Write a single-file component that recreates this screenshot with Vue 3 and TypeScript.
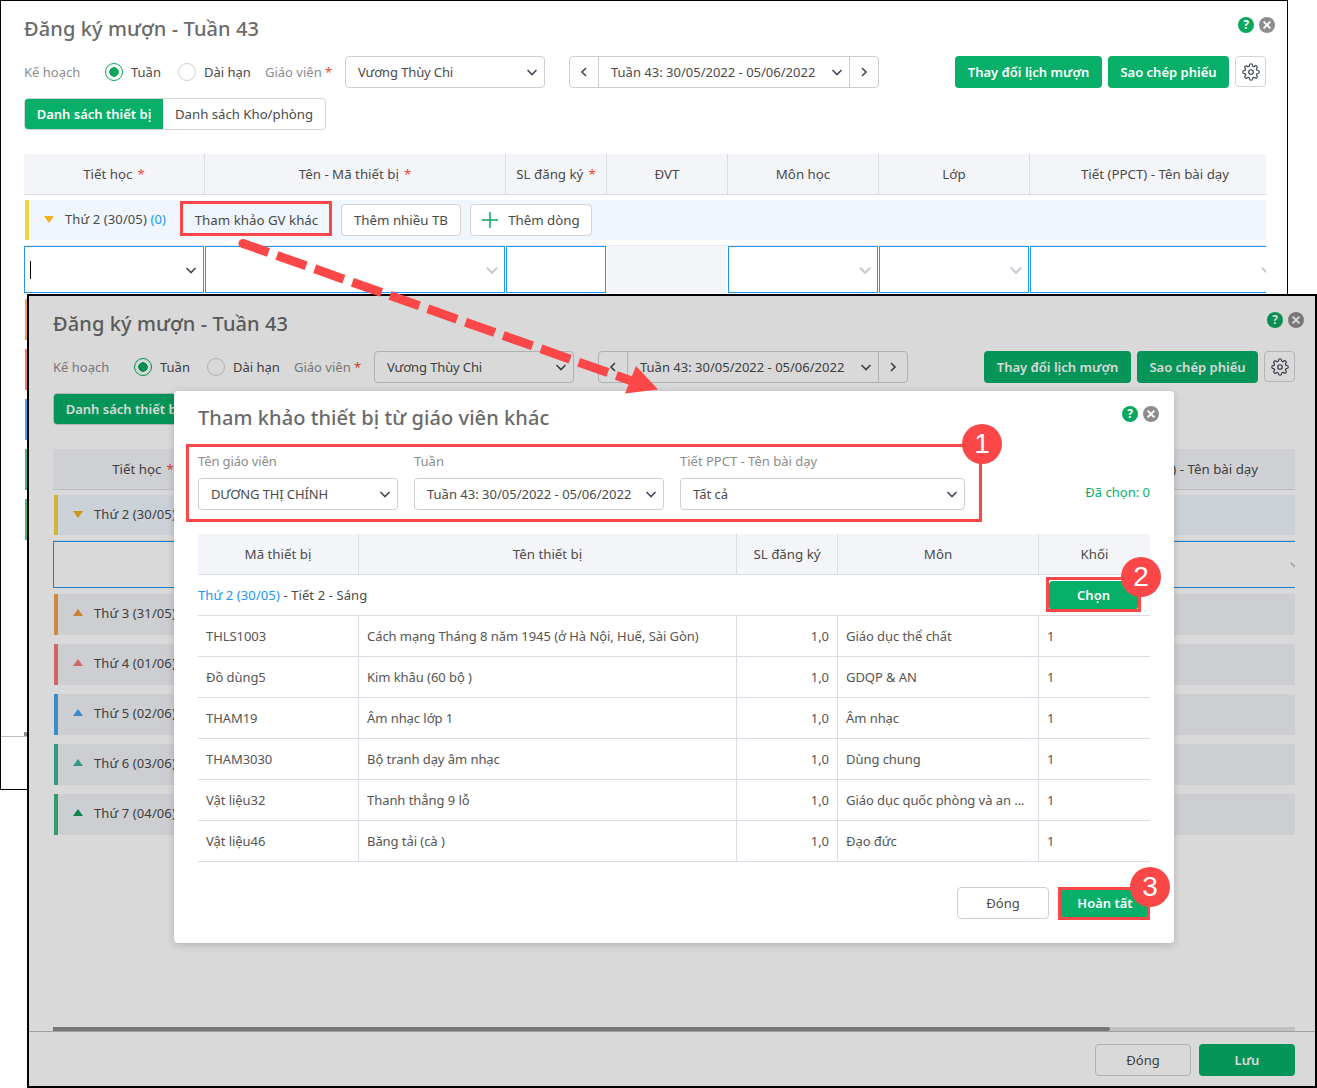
<script setup lang="ts">
const windows = [
  { key: 'back', cls: 'win-back', modal: false },
  { key: 'front', cls: 'win-front', modal: true },
]
const columns = [
  { label: 'Tiết học', req: true, underModal: false },
  { label: 'Tên - Mã thiết bị', req: true, underModal: true },
  { label: 'SL đăng ký', req: true, underModal: true },
  { label: 'ĐVT', req: false, underModal: true },
  { label: 'Môn học', req: false, underModal: true },
  { label: 'Lớp', req: false, underModal: true },
  { label: 'Tiết (PPCT) - Tên bài dạy', req: false, underModal: false },
]
const editCells = [
  { cls: 'cell-strong', chev: 'dark', caret: true },
  { cls: '', chev: 'light', caret: false },
  { cls: '', chev: '', caret: false },
  { cls: 'cell-off', chev: '', caret: false },
  { cls: '', chev: 'light', caret: false },
  { cls: '', chev: 'light', caret: false },
  { cls: 'cell-last', chev: 'light', caret: false },
]
const days = [
  { label: 'Thứ 3 (31/05)', color: '#f0a24a', dark: '#ea9a3d' },
  { label: 'Thứ 4 (01/06)', color: '#f4787a', dark: '#f0797b' },
  { label: 'Thứ 5 (02/06)', color: '#45a5ee', dark: '#45a5ee' },
  { label: 'Thứ 6 (03/06)', color: '#3fb39c', dark: '#3fb39c' },
  { label: 'Thứ 7 (04/06)', color: '#3cb878', dark: '#0f9d58' },
]
const modalCols = ['Mã thiết bị', 'Tên thiết bị', 'SL đăng ký', 'Môn', 'Khối']
const items = [
  { code: 'THLS1003', name: 'Cách mạng Tháng 8 năm 1945 (ở Hà Nội, Huế, Sài Gòn)', qty: '1,0', subject: 'Giáo dục thể chất', grade: '1' },
  { code: 'Đồ dùng5', name: 'Kim khâu (60 bộ )', qty: '1,0', subject: 'GDQP & AN', grade: '1' },
  { code: 'THAM19', name: 'Âm nhạc lớp 1', qty: '1,0', subject: 'Âm nhạc', grade: '1' },
  { code: 'THAM3030', name: 'Bộ tranh dạy âm nhạc', qty: '1,0', subject: 'Dùng chung', grade: '1' },
  { code: 'Vật liệu32', name: 'Thanh thẳng 9 lỗ', qty: '1,0', subject: 'Giáo dục quốc phòng và an ...', grade: '1' },
  { code: 'Vật liệu46', name: 'Băng tải (cà )', qty: '1,0', subject: 'Đạo đức', grade: '1' },
]
const marks = [
  { n: '1', x: 962, y: 424 },
  { n: '2', x: 1121, y: 557 },
  { n: '3', x: 1130, y: 867 },
]
const gear =
  'M19.4 15a1.65 1.65 0 0 0 .33 1.82l.06.06a2 2 0 0 1 0 2.83 2 2 0 0 1-2.83 0l-.06-.06a1.65 1.65 0 0 0-1.82-.33 1.65 1.65 0 0 0-1 1.51V21a2 2 0 0 1-2 2 2 2 0 0 1-2-2v-.09A1.65 1.65 0 0 0 9 19.4a1.65 1.65 0 0 0-1.82.33l-.06.06a2 2 0 0 1-2.83 0 2 2 0 0 1 0-2.83l.06-.06a1.65 1.65 0 0 0 .33-1.82 1.65 1.65 0 0 0-1.51-1H3a2 2 0 0 1-2-2 2 2 0 0 1 2-2h.09A1.65 1.65 0 0 0 4.6 9a1.65 1.65 0 0 0-.33-1.82l-.06-.06a2 2 0 0 1 0-2.83 2 2 0 0 1 2.83 0l.06.06a1.65 1.65 0 0 0 1.82.33H9a1.65 1.65 0 0 0 1-1.51V3a2 2 0 0 1 2-2 2 2 0 0 1 2 2v.09a1.65 1.65 0 0 0 1 1.51 1.65 1.65 0 0 0 1.82-.33l.06-.06a2 2 0 0 1 2.83 0 2 2 0 0 1 0 2.83l-.06.06a1.65 1.65 0 0 0-.33 1.82V9a1.65 1.65 0 0 0 1.51 1H21a2 2 0 0 1 2 2 2 2 0 0 1-2 2h-.09a1.65 1.65 0 0 0-1.51 1z'
</script>

<template>
  <div class="desktop">
    <section v-for="w in windows" :key="w.key" class="window" :class="w.cls">
      <header class="title-row">
        <h1 class="title">Đăng ký mượn - Tuần 43</h1>
        <div class="win-icons">
          <span class="ico-help">?</span>
          <span class="ico-close"><svg viewBox="0 0 10 10"><path d="M2.2 2.2l5.6 5.6M7.8 2.2l-5.6 5.6" /></svg></span>
        </div>
      </header>

      <div class="toolbar">
        <span class="lbl lbl-plan">Kế hoạch</span>
        <span class="radio on"></span><span class="radio-text">Tuần</span>
        <span class="radio off"></span><span class="radio-text rt2">Dài hạn</span>
        <span class="lbl lbl-teacher">Giáo viên <i class="req">*</i></span>
        <div class="select sel-teacher">
          <span>Vương Thùy Chi</span>
          <svg class="chev" viewBox="0 0 12 12"><path d="M1.5 4l4.5 4.5L10.5 4" /></svg>
        </div>
        <div class="week">
          <span class="wk-btn"><svg class="chev" viewBox="0 0 12 12"><path d="M8 2L4 6l4 4" /></svg></span>
          <div class="wk-mid">
            <span>Tuần 43: 30/05/2022 - 05/06/2022</span>
            <svg class="chev" viewBox="0 0 12 12"><path d="M1.5 4l4.5 4.5L10.5 4" /></svg>
          </div>
          <span class="wk-btn"><svg class="chev" viewBox="0 0 12 12"><path d="M4 2l4 4-4 4" /></svg></span>
        </div>
        <div class="actions">
          <button class="btn-green b-change">Thay đổi lịch mượn</button>
          <button class="btn-green b-copy">Sao chép phiếu</button>
          <span class="gear-btn">
            <svg viewBox="0 0 24 24"><circle cx="12" cy="12" r="3" /><path :d="gear" /></svg>
          </span>
        </div>
      </div>

      <div class="tabs">
        <span class="tab tab-on">Danh sách thiết bị</span>
        <span class="tab"><template v-if="!w.modal">Danh sách Kho/phòng</template></span>
      </div>

      <div class="table">
        <div class="t-head">
          <div v-for="c in columns" :key="c.label" class="th">
            <template v-if="!(w.modal && c.underModal)">{{ c.label }}<i v-if="c.req" class="req th-req">*</i></template>
          </div>
        </div>

        <div class="day-row day-open">
          <span class="day-tri down"></span>
          <span class="day-name">Thứ 2 (30/05)<b v-if="!w.modal"> (0)</b></span>
          <template v-if="!w.modal">
            <span class="btn-line b-ref">Tham khảo GV khác</span>
            <span class="btn-line b-many">Thêm nhiều TB</span>
            <span class="btn-line b-add">
              <svg class="plus" viewBox="0 0 16 16"><path d="M8 0v16M0 8h16" /></svg>
              Thêm dòng
            </span>
          </template>
        </div>

        <div class="edit-row">
          <div v-for="(c, i) in editCells" :key="i" class="cell" :class="c.cls">
            <span v-if="c.caret && !w.modal" class="caret"></span>
            <svg v-if="c.chev" class="chev" :class="c.chev" viewBox="0 0 12 12"><path d="M1.5 4l4.5 4.5L10.5 4" /></svg>
          </div>
        </div>

        <div v-for="d in days" :key="d.label" class="day-row day-closed" :style="{ borderLeftColor: d.color }">
          <span class="day-tri up" :style="{ borderBottomColor: d.dark }"></span>
          <span v-if="w.modal" class="day-name">{{ d.label }}</span>
        </div>
      </div>

      <div class="scroll"><span class="thumb"></span></div>
      <footer class="win-foot">
        <template v-if="w.modal">
          <button class="btn-plain">Đóng</button>
          <button class="btn-green b-save">Lưu</button>
        </template>
      </footer>

      <template v-if="w.modal">
        <div class="dim"></div>
        <div class="modal">
          <div class="m-title-row">
            <h2 class="m-title">Tham khảo thiết bị từ giáo viên khác</h2>
            <div class="win-icons m-icons">
              <span class="ico-help">?</span>
              <span class="ico-close"><svg viewBox="0 0 10 10"><path d="M2.2 2.2l5.6 5.6M7.8 2.2l-5.6 5.6" /></svg></span>
            </div>
          </div>

          <div class="filters">
            <label class="field f1">
              <span class="f-lbl">Tên giáo viên</span>
              <span class="select"><span>DƯƠNG THỊ CHÍNH</span><svg class="chev" viewBox="0 0 12 12"><path d="M1.5 4l4.5 4.5L10.5 4" /></svg></span>
            </label>
            <label class="field f2">
              <span class="f-lbl">Tuần</span>
              <span class="select"><span>Tuần 43: 30/05/2022 - 05/06/2022</span><svg class="chev" viewBox="0 0 12 12"><path d="M1.5 4l4.5 4.5L10.5 4" /></svg></span>
            </label>
            <label class="field f3">
              <span class="f-lbl">Tiết PPCT - Tên bài dạy</span>
              <span class="select"><span>Tất cả</span><svg class="chev" viewBox="0 0 12 12"><path d="M1.5 4l4.5 4.5L10.5 4" /></svg></span>
            </label>
            <span class="picked">Đã chọn: 0</span>
          </div>

          <div class="m-table">
            <div class="m-head">
              <div v-for="c in modalCols" :key="c" class="m-th">{{ c }}</div>
            </div>
            <div class="m-group">
              <span class="m-group-text"><a>Thứ 2 (30/05)</a> - Tiết 2 - Sáng</span>
              <button class="btn-green b-pick">Chọn</button>
            </div>
            <div v-for="it in items" :key="it.code" class="m-row">
              <div class="m-td">{{ it.code }}</div>
              <div class="m-td">{{ it.name }}</div>
              <div class="m-td num">{{ it.qty }}</div>
              <div class="m-td">{{ it.subject }}</div>
              <div class="m-td">{{ it.grade }}</div>
            </div>
          </div>

          <div class="m-foot">
            <button class="btn-plain b-m-close">Đóng</button>
            <button class="btn-green b-done">Hoàn tất</button>
          </div>
        </div>
      </template>
    </section>

    <!-- Callouts drawn over the screenshot -->
    <div class="callout c-ref"></div>
    <div class="callout c-filter"></div>
    <div class="callout c-pick"></div>
    <div class="callout c-done"></div>
    <svg class="arrow" width="1317" height="1088" viewBox="0 0 1317 1088">
      <circle cx="243" cy="243.5" r="4.5" class="arrow-head" />
      <path d="M243 243.5L632 381" class="arrow-line" />
      <path d="M658 389.5L625 393.5L636 366Z" class="arrow-head" />
    </svg>
    <span
      v-for="m in marks"
      :key="m.n"
      class="mark"
      :style="{ left: m.x + 'px', top: m.y + 'px' }"
    >{{ m.n }}</span>
  </div>
</template>

<style>
html, body { margin: 0; background: #fff; }
</style>

<style scoped>
.desktop {
  position: relative;
  width: 1317px;
  height: 1088px;
  overflow: hidden;
  font-family: "Noto Sans", "Open Sans", sans-serif;
  font-size: 13px;
  color: #4a4a4a;
  background: #fff;
}
.window {
  position: absolute;
  background: #fff;
  box-sizing: border-box;
  display: flex;
  flex-direction: column;
  overflow: hidden;
}
.win-back {
  left: 0;
  top: 0;
  width: 1288px;
  height: 790px;
  border: 1px solid #000;
  padding: 0 21px 0 23px;
}
.win-front {
  left: 27px;
  top: 294px;
  width: 1290px;
  height: 794px;
  border: 2px solid #000;
  padding: 0 20px 0 24px;
}
.title-row {
  height: 55px;
  flex: none;
  display: flex;
  justify-content: space-between;
}
.title {
  margin: 0;
  font-size: 20px;
  font-weight: 500;
  letter-spacing: 0.1px;
  line-height: 55px;
  color: #6a6a6a;
}
.win-icons {
  display: flex;
  gap: 5px;
  margin: 16px -9px 0 0;
}
.ico-help, .ico-close {
  width: 16px;
  height: 16px;
  border-radius: 50%;
  display: flex;
  align-items: center;
  justify-content: center;
}
.ico-help {
  background: #0aa85f;
  color: #fff;
  font-size: 12px;
  font-weight: 700;
  line-height: 16px;
}
.ico-close { background: #8d8d8d; }
.ico-close svg { width: 12px; height: 12px; fill: none; stroke: #fff; stroke-width: 1.6; }

.toolbar {
  height: 32px;
  flex: none;
  display: flex;
  align-items: center;
}
.lbl { color: #8c8c8c; }
.lbl-plan { width: 81px; }
.req { color: #f04438; font-style: normal; }
.radio {
  width: 18px;
  height: 18px;
  box-sizing: border-box;
  border-radius: 50%;
  flex: none;
}
.radio.on {
  border: 1px solid #0aa85f;
  background: radial-gradient(circle, #0aa85f 0 4.5px, #fff 5px);
}
.radio.off { border: 1px solid #cfcfcf; background: #fff; }
.radio-text { margin: 0 0 0 8px; width: 47px; color: #4a4a4a; }
.rt2 { width: 61px; }
.lbl-teacher { width: 80px; }
.select {
  height: 32px;
  box-sizing: border-box;
  border: 1px solid #cfcfcf;
  border-radius: 4px;
  background: #fff;
  display: flex;
  align-items: center;
  justify-content: space-between;
  padding: 0 6px 0 12px;
  color: #4a4a4a;
}
.sel-teacher { width: 200px; flex: none; letter-spacing: -0.12px; }
.chev {
  width: 12px;
  height: 12px;
  fill: none;
  stroke: #3f4a5a;
  stroke-width: 1.6;
  flex: none;
}
.chev.light { stroke: #c3c6d1; width: 14px; height: 14px; margin-right: -1px; }
.week {
  margin-left: 24px;
  width: 310px;
  height: 32px;
  flex: none;
  box-sizing: border-box;
  border: 1px solid #cfcfcf;
  border-radius: 4px;
  display: flex;
  background: #fff;
}
.wk-btn {
  width: 28px;
  flex: none;
  display: flex;
  align-items: center;
  justify-content: center;
}
.wk-mid {
  flex: 1;
  border-left: 1px solid #cfcfcf;
  border-right: 1px solid #cfcfcf;
  display: flex;
  align-items: center;
  justify-content: space-between;
  padding: 0 6px 0 12px;
}
.actions {
  margin-left: auto;
  display: flex;
  gap: 6px;
  align-items: flex-start;
}
button {
  font: inherit;
  margin: 0;
  cursor: pointer;
}
.btn-green {
  height: 32px;
  border: 0;
  border-radius: 4px;
  background: #07af68;
  color: #fff;
  font-weight: 600;
  padding: 0;
}
.b-change { width: 147px; }
.b-copy { width: 121px; }
.gear-btn {
  width: 31px;
  height: 31px;
  box-sizing: border-box;
  border: 1px solid #d4d4d4;
  border-radius: 4px;
  display: flex;
  align-items: center;
  justify-content: center;
}
.gear-btn svg {
  width: 18px;
  height: 18px;
  fill: none;
  stroke: #3f4552;
  stroke-width: 1.6;
}
.tabs {
  margin-top: 10px;
  width: 302px;
  height: 32px;
  flex: none;
  display: flex;
  box-sizing: border-box;
  border: 1px solid #d4d4d4;
  border-radius: 4px;
  overflow: hidden;
  font-size: 13.2px;
}
.tab {
  flex: 1;
  display: flex;
  align-items: center;
  justify-content: center;
}
.tab-on {
  flex: none;
  width: 138px;
  background: #07af68;
  color: #fff;
  font-weight: 600;
  font-size: 13px;
}
.table {
  margin-top: 24px;
  height: 578px;
  flex: none;
  overflow: hidden;
}
.t-head, .edit-row {
  display: grid;
  grid-template-columns: 181px 301px 101px 121px 151px 151px 250px;
}
.t-head {
  height: 41px;
  box-sizing: border-box;
  background: #f4f5f9;
  border-bottom: 1px solid #dadde6;
}
.th {
  display: flex;
  align-items: center;
  justify-content: center;
  border-right: 1px solid #dadde6;
  white-space: pre;
  font-size: 13.3px;
}
.th:last-child { border-right: 0; }
.th-req { margin-left: 5px; }
.day-row {
  height: 41px;
  box-sizing: border-box;
  display: flex;
  align-items: center;
  border-left: 4px solid;
  margin-left: 1px;
}
.day-open {
  height: 40px;
  margin-top: 5px;
  background: #eff6fd;
  border-left-color: #f5d53f;
}
.day-closed {
  margin-bottom: 9px;
  background: #f1f2f6;
}
.day-tri {
  width: 0;
  height: 0;
  margin-left: 15px;
  border-left: 5px solid transparent;
  border-right: 5px solid transparent;
  flex: none;
}
.day-tri.down { border-top: 7px solid #f2b11d; margin-top: -2px; }
.day-tri.up { border-bottom: 7px solid; margin-top: -4px; }
.day-name { margin-left: 11px; margin-top: -2px; white-space: pre; letter-spacing: 0.1px; }
.day-closed .day-name { margin-top: -4px; }
.day-name b { color: #2196f3; font-weight: 400; }
.btn-line {
  height: 32px;
  box-sizing: border-box;
  border: 1px solid #d4d4d4;
  border-radius: 4px;
  background: #fff;
  display: flex;
  align-items: center;
  justify-content: center;
  font-size: 13.3px;
}
.b-ref { margin-left: 15px; width: 151px; border-color: transparent; background: transparent; }
.b-many { margin-left: 9px; width: 120px; }
.b-add { margin-left: 9px; width: 122px; gap: 10px; }
.plus { width: 16px; height: 16px; fill: none; stroke: #0aa85f; stroke-width: 1.5; }
.edit-row {
  margin-top: 5px;
  height: 54px;
  box-sizing: border-box;
  padding-bottom: 6px;
  border-top: 1px solid #e7e9ef;
}
.cell {
  margin-right: 1px;
  box-sizing: border-box;
  border: 1px solid #2196f3;
  display: flex;
  align-items: center;
  justify-content: flex-end;
  padding-right: 6px;
  position: relative;
}
.cell-off { border: 0; background: #f4f5f9; }
.cell-last { margin-right: 0; }
.caret {
  position: absolute;
  left: 5px;
  top: 14px;
  width: 1px;
  height: 18px;
  background: #000;
}
.scroll {
  flex: none;
  height: 4px;
  background: #e2e2e2;
  margin-top: 0;
}
.thumb { display: block; height: 4px; width: 1057px; background: #8c8c8c; border-radius: 0 2px 2px 0; }
.win-foot {
  border-top: 1px solid #bdbdbd;
  margin: 0 -20px 0 -24px;
  padding: 12px 20px 0 0;
  display: flex;
  justify-content: flex-end;
  gap: 8px;
  height: 54px;
  box-sizing: border-box;
  flex: none;
}
.btn-plain {
  height: 32px;
  box-sizing: border-box;
  border: 1px solid #cfcfcf;
  border-radius: 4px;
  background: #fff;
  color: #4a4a4a;
  padding: 0;
}
.win-foot .btn-plain { width: 96px; }
.b-save { width: 96px; }
.dim {
  position: absolute;
  inset: 0;
  background: rgba(0, 0, 0, 0.15);
}
.modal {
  position: absolute;
  left: 145px;
  top: 95px;
  width: 1000px;
  height: 552px;
  box-sizing: border-box;
  padding: 0 24px;
  background: #fff;
  border-radius: 4px;
  box-shadow: 0 2px 8px rgba(0, 0, 0, 0.18);
  display: flex;
  flex-direction: column;
}
.m-title-row {
  height: 53px;
  flex: none;
  display: flex;
  justify-content: space-between;
}
.m-title {
  margin: 0;
  font-size: 20px;
  font-weight: 500;
  letter-spacing: 0.08px;
  line-height: 54px;
  color: #6a6a6a;
}
.m-icons { margin: 15px -9px 0 0; }
.filters {
  display: flex;
  gap: 16px;
  height: 66px;
  flex: none;
  margin-top: 8px;
}
.field { display: flex; flex-direction: column; gap: 8px; flex: none; }
.f-lbl { color: #8c8c8c; line-height: 18px; }
.f1 { width: 200px; letter-spacing: -0.12px; }
.f2 { width: 250px; }
.f3 { width: 285px; }
.picked {
  margin-left: auto;
  align-self: flex-start;
  margin-top: 31px;
  color: #07af68;
}
.m-table { margin-top: 16px; flex: none; }
.m-head, .m-row {
  display: grid;
  grid-template-columns: 161px 378px 101px 201px 111px;
}
.m-head {
  height: 41px;
  box-sizing: border-box;
  background: #f4f5f9;
  border-bottom: 1px solid #dadde6;
}
.m-th {
  display: flex;
  align-items: center;
  justify-content: center;
  border-right: 1px solid #dadde6;
  font-size: 13.3px;
}
.m-th:last-child { border-right: 0; }
.m-group {
  height: 41px;
  box-sizing: border-box;
  border-bottom: 1px solid #dadde6;
  display: flex;
  align-items: center;
  justify-content: space-between;
  padding-right: 12px;
}
.m-group-text { letter-spacing: 0.1px; }
.m-group a { color: #2196f3; }
.b-pick { width: 89px; height: 29px; }
.m-row {
  height: 41px;
  box-sizing: border-box;
  border-bottom: 1px solid #dadde6;
}
.m-td {
  display: flex;
  align-items: center;
  padding: 0 8px;
  border-right: 1px solid #dadde6;
  white-space: nowrap;
  overflow: hidden;
  color: #555;
  letter-spacing: -0.06px;
}
.m-td:last-child { border-right: 0; }
.m-td.num { justify-content: flex-end; }
.m-foot {
  margin-top: 25px;
  display: flex;
  justify-content: flex-end;
  gap: 11px;
}
.b-m-close { width: 92px; }
.b-done { width: 90px; }

.callout {
  position: absolute;
  box-sizing: border-box;
  border: 3px solid #fb4747;
}
.c-ref { left: 180px; top: 201px; width: 152px; height: 35px; }
.c-filter { left: 186px; top: 444px; width: 796px; height: 78px; }
.c-pick { left: 1046px; top: 577px; width: 95px; height: 35px; }
.c-done { left: 1058px; top: 887px; width: 92px; height: 33px; }
.arrow { position: absolute; left: 0; top: 0; pointer-events: none; }
.arrow-line { stroke: #fb4747; stroke-width: 9; fill: none; stroke-dasharray: 31 9; stroke-dashoffset: 4; stroke-linecap: butt; }
.arrow-head { fill: #fb4747; }
.mark {
  position: absolute;
  width: 40px;
  height: 40px;
  border-radius: 50%;
  background: #fb4747;
  color: #fff;
  font-family: "Liberation Sans", Arial, sans-serif;
  font-size: 28px;
  line-height: 40px;
  text-align: center;
}
</style>
